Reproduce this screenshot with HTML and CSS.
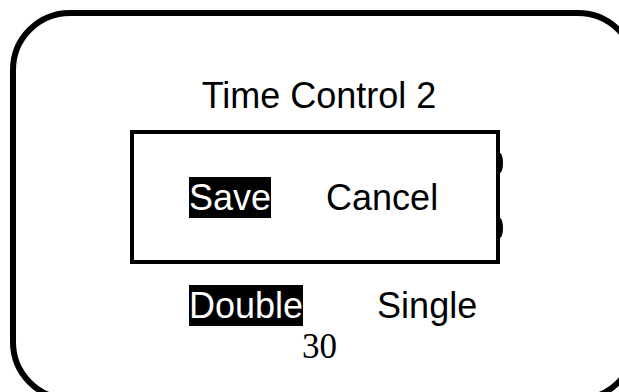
FILE: index.html
```html
<!DOCTYPE html>
<html lang="en">
<head>
    <meta charset="UTF-8">
    <meta name="viewport" content="width=device-width, initial-scale=1.0">
    <title>Time Control 2</title>
    <link rel="stylesheet" href="styles.css">
</head>
<body>
    <div class="screen">
        <div class="frame">
            <div class="title">Time Control 2</div>

            <div class="dialog">
                <div class="choices">
                    <span class="choice selected">Save</span>
                    <span class="choice cancel">Cancel</span>
                </div>
                <span class="bump bump-top"></span>
                <span class="bump bump-bottom"></span>
            </div>

            <div class="choices mode">
                <span class="choice selected">Double</span>
                <span class="choice single">Single</span>
            </div>

            <div class="value">30</div>
        </div>
    </div>
</body>
</html>
```

FILE: styles.css
```css
body {
    margin: 0;
    padding: 0;
    background-color: #fff;
    color: #000;
    font-family: "Liberation Sans", Arial, sans-serif;
}
.screen {
    width: 619px;
    height: 392px;
    padding-top: 10px;
    box-sizing: border-box;
    overflow: hidden;
}
.frame {
    box-sizing: border-box;
    width: 628px;
    height: 392px;
    margin-left: 10px;
    border: 6px solid #000;
    border-radius: 60px;
}
.title {
    margin-top: 60px;
    padding-right: 10px;
    font-size: 36px;
    line-height: 40px;
    text-align: center;
}
.dialog {
    position: relative;
    box-sizing: border-box;
    width: 370px;
    height: 134px;
    margin: 14px 0 0 114px;
    border: 4px solid #000;
    background-color: #fff;
}
.choices {
    display: flex;
    font-size: 36px;
    line-height: 41px;
}
.dialog .choices {
    padding: 43px 0 0 55px;
}
.selected {
    background-color: #000;
    color: #fff;
}
.cancel {
    margin-left: 55px;
}
.bump {
    position: absolute;
    right: -7px;
    width: 3px;
    height: 20px;
    background-color: #000;
    border-radius: 0 3px 3px 0 / 0 10px 10px 0;
}
.bump-top {
    top: 19px;
}
.bump-bottom {
    top: 84px;
}
.mode {
    margin: 21px 0 0 173px;
}
.single {
    margin-left: 74px;
}
.value {
    margin-top: 1px;
    padding-right: 9px;
    font-family: "Liberation Serif", "Times New Roman", serif;
    font-size: 35px;
    line-height: 40px;
    text-align: center;
}
```
